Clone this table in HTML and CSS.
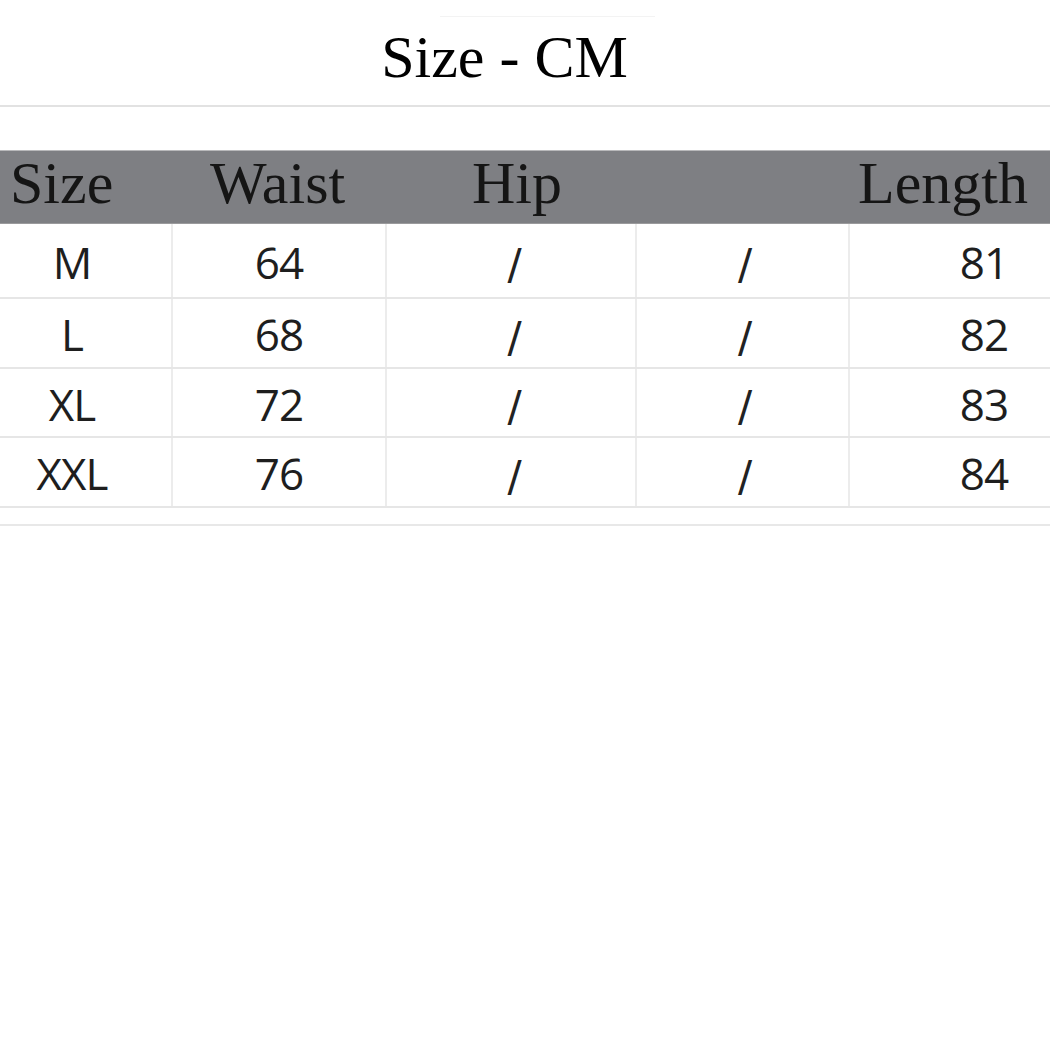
FILE: index.html
```html
<!DOCTYPE html>
<html lang="en">
<head>
<meta charset="utf-8">
<title>Size - CM</title>
<link rel="stylesheet" href="styles.css">
</head>
<body>
<div class="page">
  <div class="title-wrap">
    <div class="faint"></div>
    <h1 class="title">Size - CM</h1>
  </div>
  <div class="rule"></div>
  <div class="chart">
    <div class="head">
      <div class="h h1">Size</div>
      <div class="h h2">Waist</div>
      <div class="h h3">Hip</div>
      <div class="h h4"></div>
      <div class="h h5">Length</div>
    </div>
    <div class="row r1">
      <div class="c c1">M</div><div class="c c2">64</div><div class="c c3">/</div><div class="c c4">/</div><div class="c c5">81</div>
    </div>
    <div class="row r2">
      <div class="c c1">L</div><div class="c c2">68</div><div class="c c3">/</div><div class="c c4">/</div><div class="c c5">82</div>
    </div>
    <div class="row r3">
      <div class="c c1">XL</div><div class="c c2">72</div><div class="c c3">/</div><div class="c c4">/</div><div class="c c5">83</div>
    </div>
    <div class="row r4">
      <div class="c c1">XXL</div><div class="c c2">76</div><div class="c c3">/</div><div class="c c4">/</div><div class="c c5">84</div>
    </div>
    <div class="tail"></div>
  </div>
</div>
</body>
</html>
```

FILE: styles.css
```css
html, body {
  margin: 0;
  padding: 0;
  background: #ffffff;
}
.page {
  width: 1050px;
  height: 1050px;
  overflow: hidden;
}
.title-wrap {
  position: relative;
  padding-top: 27px;
}
.faint {
  position: absolute;
  top: 16px;
  left: 440px;
  width: 215px;
  height: 1px;
  background: #f3f3f3;
}
.title {
  margin: 0;
  font-family: "Liberation Serif", "Times New Roman", serif;
  font-weight: normal;
  font-size: 60px;
  line-height: 60px;
  color: #000;
  text-align: center;
  padding-right: 41px;
}
.rule {
  margin-top: 18px;
  height: 2px;
  background: #e2e2e2;
}
.chart {
  margin-top: 43px;
}
.head {
  display: grid;
  grid-template-columns: 173px 214px 250px 213px 200px;
  height: 74px;
  background: #7e7f83;
  border-top: 1px solid #b9b9bb;
  box-sizing: border-box;
  border-bottom: 1px solid #9a9a9c;
}
.h {
  font-family: "Liberation Serif", "Times New Roman", serif;
  font-size: 60px;
  line-height: 64px;
  color: #151515;
  white-space: nowrap;
}
.h1 { padding-left: 10px; }
.h2 { padding-left: 37px; }
.h3 { padding-left: 85px; }
.h5 { padding-left: 8px; }
.row {
  display: grid;
  grid-template-columns: 173px 214px 250px 213px 200px;
  border-bottom: 2px solid #e6e6e6;
  align-items: stretch;
}
.r1 { height: 73px; }
.r2 { height: 68px; }
.r3 { height: 67px; }
.r4 { height: 68px; }
.c {
  display: flex;
  align-items: center;
  justify-content: center;
  font-family: "Open Sans", "Noto Sans", sans-serif;
  font-size: 44px;
  letter-spacing: -1px;
  color: #1e1e1e;
  border-right: 2px solid #ececec;
  box-sizing: border-box;
  padding-top: 2px;
}
.c1 { padding-right: 27px; }
.c3, .c4 {
  font-family: "DejaVu Sans", sans-serif;
  font-size: 42px;
  padding-top: 8px;
  color: #222;
}
.c3 { padding-left: 6px; }
.c4 { padding-left: 4px; }
.c5 {
  border-right: none;
  padding-left: 68px;
}
.tail {
  margin-top: 16px;
  height: 2px;
  background: #e8e8e8;
}
```
